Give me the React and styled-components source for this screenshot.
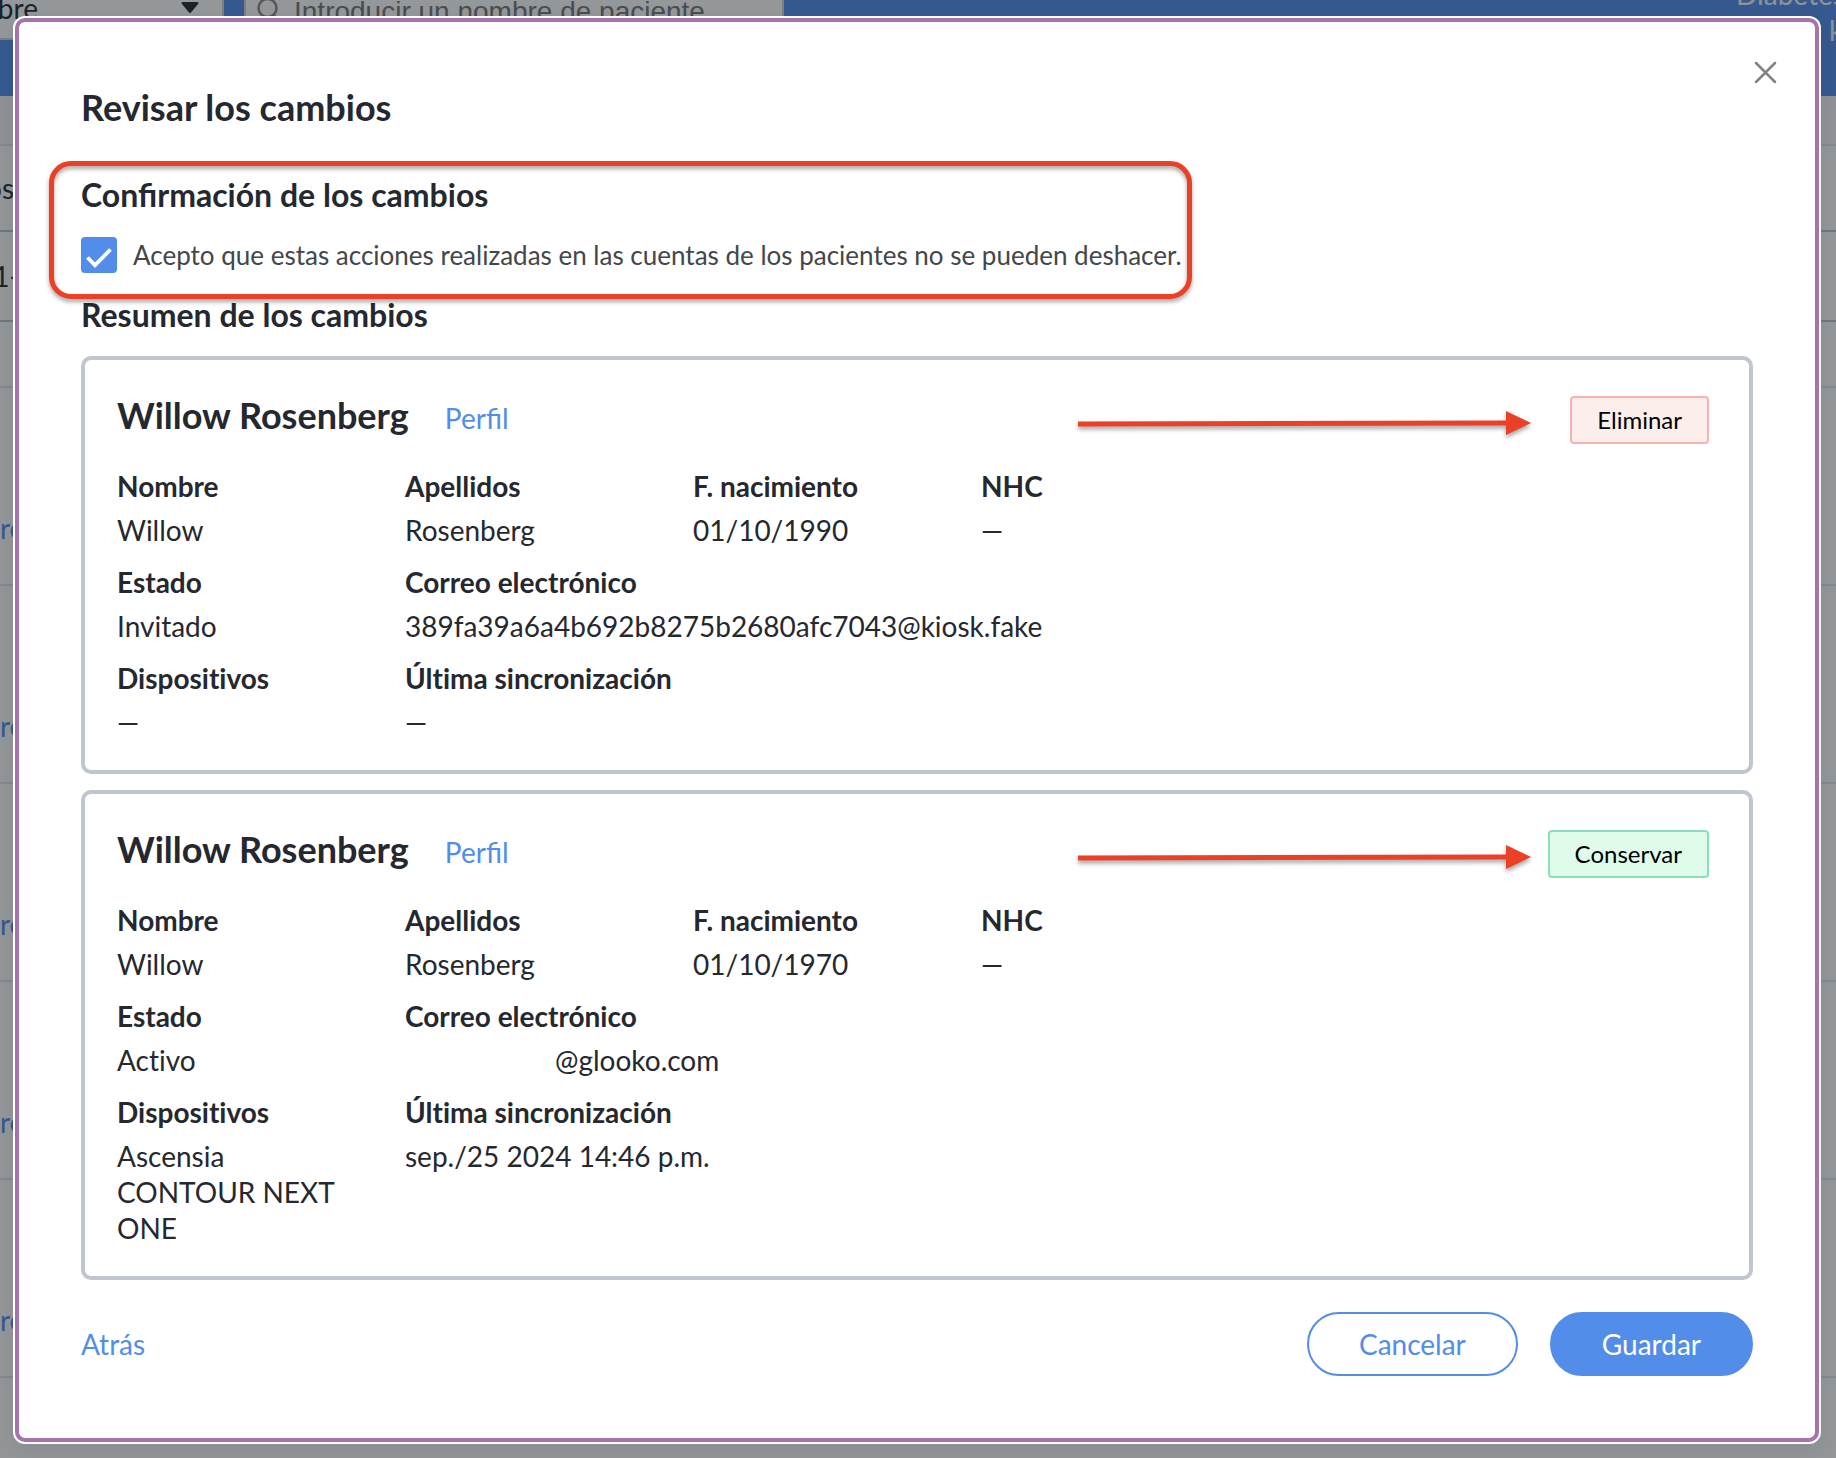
import React from "react";
import styled, { createGlobalStyle } from "styled-components";

const GlobalStyle = createGlobalStyle`
  *, *::before, *::after { box-sizing: border-box; }
  body {
    margin: 0;
    font-family: Lato, "Open Sans", sans-serif;
    font-size: 28px;
    line-height: 36px;
    font-variant-ligatures: none;
    color: #25282f;
    background: #ffffff;
  }
  h1, h2, h3, dl, dd, p { margin: 0; }
  button, input, select { font: inherit; color: inherit; }
`;

const accent = "#528dea";

/* ---------- Page behind the dialog ---------- */

const Page = styled.div`
  height: 100vh;
  overflow: hidden;
`;

const TopBar = styled.header`
  display: flex;
  align-items: flex-start;
  height: 96px;
  overflow: hidden;
  background: ${accent};
`;

const FieldShell = styled.div`
  display: flex;
  align-items: center;
  height: 64px;
  margin-top: -24px;
  background: #ffffff;
  border: 2px solid #d2d2d2;
`;

const TypeField = styled(FieldShell)`
  width: 288px;
  margin-left: -64px;
  margin-right: 20px;
  padding-right: 23px;
`;

const TypeSelect = styled.select`
  flex: 1;
  padding: 0;
  border: 0;
  background: none;
  appearance: none;
`;

const SearchField = styled(FieldShell)`
  width: 540px;
  padding-left: 11px;
  gap: 16px;
`;

const SearchInput = styled.input`
  flex: 1;
  min-width: 0;
  padding: 8px 0 0;
  border: 0;
  background: none;
  font-family: "Liberation Sans", Arial, sans-serif;
  &::placeholder { color: #757575; opacity: 1; }
`;

const Clinic = styled.div`
  width: 100px;
  margin: -24px 0 0 auto;
  color: #f5f5f5;
  white-space: nowrap;
`;

const ClinicUser = styled.p`
  padding-left: 93px;
`;

const Band = styled.div`
  height: ${(p) => p.$height}px;
  background: ${(p) => p.$fill || "#fdfdfd"};
  border-bottom: 2px solid ${(p) => (p.$strong ? "#b9c2cc" : "#dfe3ea")};
`;

const EdgeCell = styled.div`
  display: flex;
  align-items: center;
  justify-content: flex-end;
  width: ${(p) => p.$width}px;
  height: 100%;
`;

const PatientRow = styled(Band)`
  padding-top: 122px;
`;

const TextLink = styled.a`
  color: ${accent};
  font-variant-ligatures: normal;
  text-decoration: none;
`;

/* ---------- Dialog ---------- */

const Overlay = styled.div`
  position: fixed;
  inset: 0;
  padding: 16px 15px 13px 13px;
  overflow: hidden;
  background: rgba(22, 30, 37, 0.46);
`;

const Frame = styled.div`
  padding: 2px;
  border-radius: 12px;
  background: #ffffff;
  box-shadow: 0 8px 24px rgba(0, 0, 0, 0.08);
`;

const Dialog = styled.div`
  position: relative;
  padding: 62px;
  border: 4px solid #a673ac;
  border-radius: 10px;
  background: #ffffff;
`;

const CloseButton = styled.button`
  position: absolute;
  top: 32px;
  right: 32px;
  display: flex;
  padding: 4px;
  border: 0;
  background: none;
  color: #808284;
`;

const Title = styled.h1`
  margin-bottom: 45px;
  font-size: 36px;
  line-height: 46px;
`;

const SectionTitle = styled.h2`
  font-size: 32px;
  line-height: 40px;
  font-variant-ligatures: normal;
`;

const Confirmation = styled.section`
  position: relative;
  width: fit-content;
  margin-bottom: 22px;
  &::after {
    content: "";
    position: absolute;
    inset: -14px -10px -26px -32px;
    border: 5px solid #eb4025;
    border-radius: 22px;
    filter: drop-shadow(0 3px 2px rgba(0, 0, 0, 0.35));
    pointer-events: none;
  }
`;

const ConfirmRow = styled.div`
  display: flex;
  align-items: center;
  gap: 16px;
  margin-top: 22px;
  font-size: 26px;
  color: #444749;
`;

const CheckWrap = styled.span`
  display: grid;
  width: 36px;
  height: 36px;
  > * { grid-area: 1 / 1; }
  svg { pointer-events: none; }
`;

const CheckInput = styled.input`
  width: 36px;
  height: 36px;
  margin: 0;
  appearance: none;
  border: 2px solid ${accent};
  border-radius: 4px;
  &:checked { background: ${accent}; }
`;

const Cards = styled.div`
  display: flex;
  flex-direction: column;
  gap: 16px;
  margin-top: 21px;
`;

const Card = styled.article`
  position: relative;
  padding: 33px 32px 30px;
  border: 4px solid #bfc6d0;
  border-radius: 10px;
`;

const CardHeader = styled.header`
  display: flex;
  align-items: baseline;
  gap: 36px;
  padding-right: 8px;
  margin-bottom: 24px;
`;

const PatientName = styled.h3`
  font-size: 36px;
  line-height: 44px;
`;

const Badge = styled.span`
  margin-left: auto;
  padding: 0 25px;
  border: 2px solid ${(p) => (p.$keep ? "#8be0bb" : "#f6b3b0")};
  border-radius: 4px;
  background: ${(p) => (p.$keep ? "#dffbea" : "#fceeeb")};
  color: #000000;
  font-size: 24px;
  line-height: 44px;
`;

const Pointer = styled.svg`
  position: absolute;
  top: 48px;
  right: 218px;
  overflow: visible;
  filter: drop-shadow(0 3px 2px rgba(0, 0, 0, 0.35));
`;

const Details = styled.dl`
  display: grid;
  grid-template-columns: repeat(4, 224px);
  column-gap: 64px;
  row-gap: 16px;
`;

const Field = styled.div`
  grid-column: span ${(p) => p.$span || 1};
`;

const Term = styled.dt`
  margin-bottom: 8px;
  font-weight: 700;
`;

const HiddenUser = styled.span`
  display: inline-block;
  width: 150px;
`;

const Footer = styled.footer`
  display: flex;
  align-items: center;
  gap: 32px;
  margin-top: 32px;
`;

const BackLink = styled(TextLink)`
  margin-right: auto;
`;

const PillButton = styled.button`
  height: 64px;
  padding: 0 50px;
  border: 2px solid ${accent};
  border-radius: 32px;
  background: ${(p) => (p.$primary ? accent : "#ffffff")};
  color: ${(p) => (p.$primary ? "#ffffff" : accent)};
`;

const patients = [
  {
    id: "a",
    keep: false,
    birth: "01/10/1990",
    state: "Invitado",
    email: "389fa39a6a4b692b8275b2680afc7043@kiosk.fake",
    devices: "—",
    sync: "—",
  },
  {
    id: "b",
    keep: true,
    birth: "01/10/1970",
    state: "Activo",
    email: (
      <>
        <HiddenUser />
        @glooko.com
      </>
    ),
    devices: "Ascensia CONTOUR NEXT ONE",
    sync: "sep./25 2024 14:46 p.m.",
  },
];

function DetailField({ label, span, children }) {
  return (
    <Field $span={span}>
      <Term>{label}</Term>
      <dd>{children}</dd>
    </Field>
  );
}

function PatientCard({ patient }) {
  return (
    <Card>
      <CardHeader>
        <PatientName>Willow Rosenberg</PatientName>
        <TextLink href="#perfil">Perfil</TextLink>
        <Badge $keep={patient.keep}>{patient.keep ? "Conservar" : "Eliminar"}</Badge>
      </CardHeader>
      <Pointer width="453" height="30" viewBox="0 0 453 30" aria-hidden="true">
        <path d="M0 16 L430 15" stroke="#eb4025" strokeWidth="5" />
        <path d="M428 3 L453 15 L428 27 Z" fill="#eb4025" />
      </Pointer>
      <Details>
        <DetailField label="Nombre">Willow</DetailField>
        <DetailField label="Apellidos">Rosenberg</DetailField>
        <DetailField label="F. nacimiento">{patient.birth}</DetailField>
        <DetailField label="NHC">—</DetailField>
        <DetailField label="Estado">{patient.state}</DetailField>
        <DetailField label="Correo electrónico" span={3}>{patient.email}</DetailField>
        <DetailField label="Dispositivos">{patient.devices}</DetailField>
        <DetailField label="Última sincronización" span={3}>{patient.sync}</DetailField>
      </Details>
    </Card>
  );
}

function PatientsPage() {
  return (
    <Page>
      <TopBar>
        <TypeField>
          <TypeSelect aria-label="Buscar por" defaultValue="nombre">
            <option value="nombre">Nombre</option>
          </TypeSelect>
          <svg width="18" height="12" viewBox="0 0 18 12" aria-hidden="true">
            <path d="M1.500 1 H16.500 L9 10 Z" fill="#25282f" stroke="#25282f" strokeWidth="2" strokeLinejoin="round" />
          </svg>
        </TypeField>
        <SearchField>
          <svg width="21" height="24" viewBox="0 0 21 24" fill="none" stroke="#8a8a8a" strokeWidth="2.500" aria-hidden="true">
            <circle cx="10.500" cy="12" r="9" />
            <path d="M16 18 L20 23" />
          </svg>
          <SearchInput aria-label="Buscar paciente" placeholder="Introducir un nombre de paciente" />
        </SearchField>
        <Clinic>
          <p>Diabetes</p>
          <ClinicUser>k</ClinicUser>
        </Clinic>
      </TopBar>
      <Band $height={50} $fill="#f5f6f8" />
      <Band $height={86} $strong>
        <EdgeCell $width={14}>os</EdgeCell>
      </Band>
      <Band $height={90} $strong>
        <EdgeCell $width={20}>1-</EdgeCell>
      </Band>
      <Band $height={66} />
      {[1, 2, 3, 4, 5, 6].map((row) => (
        <PatientRow key={row} $height={198}>
          <TextLink href="#paciente">re</TextLink>
        </PatientRow>
      ))}
    </Page>
  );
}

export default function App() {
  return (
    <>
      <GlobalStyle />
      <PatientsPage />
      <Overlay>
        <Frame>
          <Dialog role="dialog" aria-modal="true" aria-labelledby="dialog-title">
            <CloseButton type="button" aria-label="Cerrar">
              <svg width="28" height="28" viewBox="0 0 28 28" fill="none" stroke="currentColor" strokeWidth="2.500" strokeLinecap="round">
                <path d="M5 5 L24 24 M24 5 L5 24" />
              </svg>
            </CloseButton>
            <Title id="dialog-title">Revisar los cambios</Title>
            <Confirmation>
              <SectionTitle>Confirmación de los cambios</SectionTitle>
              <ConfirmRow>
                <CheckWrap>
                  <CheckInput id="accept" type="checkbox" defaultChecked />
                  <svg width="36" height="36" viewBox="0 0 36 36" fill="none" stroke="#ffffff" strokeWidth="3.800" aria-hidden="true">
                    <path d="M6.500 20.500 L14 28.200 L29.500 12.500" />
                  </svg>
                </CheckWrap>
                <label htmlFor="accept">
                  Acepto que estas acciones realizadas en las cuentas de los pacientes no se pueden deshacer.
                </label>
              </ConfirmRow>
            </Confirmation>
            <SectionTitle>Resumen de los cambios</SectionTitle>
            <Cards>
              {patients.map((patient) => (
                <PatientCard key={patient.id} patient={patient} />
              ))}
            </Cards>
            <Footer>
              <BackLink href="#atras">Atrás</BackLink>
              <PillButton type="button">Cancelar</PillButton>
              <PillButton type="button" $primary>Guardar</PillButton>
            </Footer>
          </Dialog>
        </Frame>
      </Overlay>
    </>
  );
}
